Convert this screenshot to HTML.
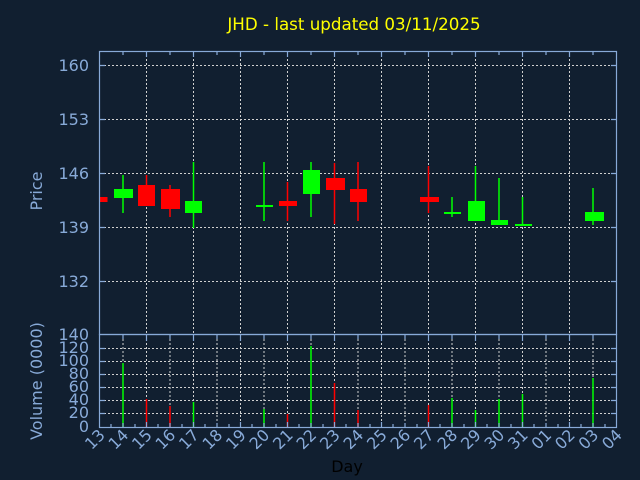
<!DOCTYPE html>
<html><head><meta charset="utf-8"><style>
html,body{margin:0;padding:0;background:#111f30;}
svg{display:block}
text{font-family:"DejaVu Sans","Liberation Sans",sans-serif;}
</style></head><body>
<svg width="640" height="480" viewBox="0 0 640 480" xmlns="http://www.w3.org/2000/svg">
<rect width="640" height="480" fill="#111f30"/>
<text x="354" y="30" fill="#ffff00" font-size="16.7" text-anchor="middle">JHD - last updated 03/11/2025</text>
<g stroke="#d0d0d0" stroke-width="1" stroke-dasharray="2,2" fill="none">
<path d="M100 65.5H616M100 119.5H616M100 173.5H616M100 227.5H616M100 281.5H616"/>
<path d="M146.5 51V334M193.5 51V334M240.5 51V334M287.5 51V334M334.5 51V334M381.5 51V334M428.5 51V334M475.5 51V334M522.5 51V334M569.5 51V334"/>
<path d="M100 348.5H616M100 361.5H616M100 374.5H616M100 387.5H616M100 400.5H616M100 413.5H616"/>
<path d="M123 335V427M146.5 335V427M170 335V427M193.5 335V427M217 335V427M240.5 335V427M264 335V427M287.5 335V427M311 335V427M334.5 335V427M358 335V427M381.5 335V427M405 335V427M428.5 335V427M452 335V427M475.5 335V427M499 335V427M522.5 335V427M546 335V427M569.5 335V427M593 335V427"/>
</g>
<g stroke-width="1.5">
<rect x="99.5" y="197" width="8" height="5" fill="#ff0000"/>
<line x1="123" y1="175" x2="123" y2="213" stroke="#00ff00"/><rect x="114" y="189" width="19" height="9" fill="#00ff00"/>
<line x1="146.5" y1="175" x2="146.5" y2="206" stroke="#ff0000"/><rect x="138" y="185" width="17" height="21" fill="#ff0000"/>
<line x1="170" y1="185" x2="170" y2="217" stroke="#ff0000"/><rect x="161" y="189" width="19" height="20" fill="#ff0000"/>
<line x1="193.5" y1="162" x2="193.5" y2="228" stroke="#00ff00"/><rect x="185" y="201" width="17" height="12" fill="#00ff00"/>
<line x1="264" y1="162" x2="264" y2="221" stroke="#00ff00"/><rect x="256" y="205" width="17" height="2" fill="#00ff00"/>
<line x1="287.5" y1="182" x2="287.5" y2="221" stroke="#ff0000"/><rect x="279" y="201" width="18" height="5" fill="#ff0000"/>
<line x1="311" y1="162" x2="311" y2="217" stroke="#00ff00"/><rect x="303" y="170" width="17" height="24" fill="#00ff00"/>
<line x1="334.5" y1="163" x2="334.5" y2="224" stroke="#ff0000"/><rect x="326" y="178" width="19" height="12" fill="#ff0000"/>
<line x1="358" y1="162" x2="358" y2="221" stroke="#ff0000"/><rect x="350" y="189" width="17" height="13" fill="#ff0000"/>
<line x1="428.5" y1="166" x2="428.5" y2="213" stroke="#ff0000"/><rect x="420" y="197" width="19" height="5" fill="#ff0000"/>
<line x1="452" y1="197" x2="452" y2="217" stroke="#00ff00"/><rect x="444" y="212" width="17" height="2" fill="#00ff00"/>
<line x1="475.5" y1="166" x2="475.5" y2="221" stroke="#00ff00"/><rect x="468" y="201" width="17" height="20" fill="#00ff00"/>
<line x1="499" y1="178" x2="499" y2="225" stroke="#00ff00"/><rect x="491" y="220" width="17" height="5" fill="#00ff00"/>
<line x1="522.5" y1="197" x2="522.5" y2="226" stroke="#00ff00"/><rect x="515" y="224" width="17" height="2" fill="#00ff00"/>
<line x1="593" y1="188" x2="593" y2="225" stroke="#00ff00"/><rect x="585" y="212" width="19" height="9" fill="#00ff00"/>
</g>
<g stroke-width="1.5">
<line x1="123" y1="363" x2="123" y2="427" stroke="#00ff00"/>
<line x1="146.5" y1="399" x2="146.5" y2="427" stroke="#ff0000"/>
<line x1="170" y1="406" x2="170" y2="427" stroke="#ff0000"/>
<line x1="193.5" y1="402" x2="193.5" y2="427" stroke="#00ff00"/>
<line x1="264" y1="409" x2="264" y2="427" stroke="#00ff00"/>
<line x1="287.5" y1="414" x2="287.5" y2="427" stroke="#ff0000"/>
<line x1="311" y1="346" x2="311" y2="427" stroke="#00ff00"/>
<line x1="334.5" y1="383" x2="334.5" y2="427" stroke="#ff0000"/>
<line x1="358" y1="410" x2="358" y2="427" stroke="#ff0000"/>
<line x1="428.5" y1="405" x2="428.5" y2="427" stroke="#ff0000"/>
<line x1="452" y1="398" x2="452" y2="427" stroke="#00ff00"/>
<line x1="475.5" y1="410" x2="475.5" y2="427" stroke="#00ff00"/>
<line x1="499" y1="399" x2="499" y2="427" stroke="#00ff00"/>
<line x1="522.5" y1="394" x2="522.5" y2="427" stroke="#00ff00"/>
<line x1="593" y1="378" x2="593" y2="427" stroke="#00ff00"/>
</g>
<g stroke="#88aad8" stroke-width="1.2" fill="none">
<rect x="99.5" y="51.5" width="517" height="283"/>
<rect x="99.5" y="334.5" width="517" height="93"/>
<path d="M100 65.5h5M100 119.5h5M100 173.5h5M100 227.5h5M100 281.5h5M616 65.5h-5M616 119.5h-5M616 173.5h-5M616 227.5h-5M616 281.5h-5"/>
<path d="M100 348.5h5M100 361.5h5M100 374.5h5M100 387.5h5M100 400.5h5M100 413.5h5M616 348.5h-5M616 361.5h-5M616 374.5h-5M616 387.5h-5M616 400.5h-5M616 413.5h-5"/>
<path d="M123 51v4M146.5 51v6M170 51v4M193.5 51v6M217 51v4M240.5 51v6M264 51v4M287.5 51v6M311 51v4M334.5 51v6M358 51v4M381.5 51v6M405 51v4M428.5 51v6M452 51v4M475.5 51v6M499 51v4M522.5 51v6M546 51v4M569.5 51v6M593 51v4"/>
<path d="M123 335v4M146.5 335v6M170 335v4M193.5 335v6M217 335v4M240.5 335v6M264 335v4M287.5 335v6M311 335v4M334.5 335v6M358 335v4M381.5 335v6M405 335v4M428.5 335v6M452 335v4M475.5 335v6M499 335v4M522.5 335v6M546 335v4M569.5 335v6M593 335v4"/>
<path d="M111 427v-3M123 427v-4M135 427v-3M146.5 427v-5M158 427v-3M170 427v-4M182 427v-3M193.5 427v-5M205 427v-3M217 427v-4M229 427v-3M240.5 427v-5M252 427v-3M264 427v-4M276 427v-3M287.5 427v-5M299 427v-3M311 427v-4M323 427v-3M334.5 427v-5M346 427v-3M358 427v-4M370 427v-3M381.5 427v-5M393 427v-3M405 427v-4M417 427v-3M428.5 427v-5M440 427v-3M452 427v-4M464 427v-3M475.5 427v-5M487 427v-3M499 427v-4M511 427v-3M522.5 427v-5M534 427v-3M546 427v-4M558 427v-3M569.5 427v-5M581 427v-3M593 427v-4M605 427v-3"/>
</g>
<g fill="#88aad8" font-size="16" text-anchor="end">
<text x="89" y="71">160</text><text x="89" y="125">153</text><text x="89" y="179">146</text><text x="89" y="233">139</text><text x="89" y="287">132</text>
<text x="89" y="340">140</text><text x="89" y="353">120</text><text x="89" y="366">100</text><text x="89" y="379">80</text><text x="89" y="392">60</text><text x="89" y="405">40</text><text x="89" y="418">20</text><text x="89" y="432">0</text>
</g>
<text x="42" y="191" fill="#88aad8" font-size="16" text-anchor="middle" transform="rotate(-90 42 191)">Price</text>
<text x="42" y="381" fill="#88aad8" font-size="16" text-anchor="middle" transform="rotate(-90 42 381)">Volume (0000)</text>
<text x="347" y="472" fill="#000" font-size="16" text-anchor="middle">Day</text>
<g fill="#88aad8" font-size="16" text-anchor="end">
<text transform="translate(106,436) rotate(-45)">13</text>
<text transform="translate(129.5,436) rotate(-45)">14</text>
<text transform="translate(153,436) rotate(-45)">15</text>
<text transform="translate(176.5,436) rotate(-45)">16</text>
<text transform="translate(200,436) rotate(-45)">17</text>
<text transform="translate(223.5,436) rotate(-45)">18</text>
<text transform="translate(247,436) rotate(-45)">19</text>
<text transform="translate(270.5,436) rotate(-45)">20</text>
<text transform="translate(294,436) rotate(-45)">21</text>
<text transform="translate(317.5,436) rotate(-45)">22</text>
<text transform="translate(341,436) rotate(-45)">23</text>
<text transform="translate(364.5,436) rotate(-45)">24</text>
<text transform="translate(388,436) rotate(-45)">25</text>
<text transform="translate(411.5,436) rotate(-45)">26</text>
<text transform="translate(435,436) rotate(-45)">27</text>
<text transform="translate(458.5,436) rotate(-45)">28</text>
<text transform="translate(482,436) rotate(-45)">29</text>
<text transform="translate(505.5,436) rotate(-45)">30</text>
<text transform="translate(529,436) rotate(-45)">31</text>
<text transform="translate(552.5,436) rotate(-45)">01</text>
<text transform="translate(576,436) rotate(-45)">02</text>
<text transform="translate(599.5,436) rotate(-45)">03</text>
<text transform="translate(623,436) rotate(-45)">04</text>
</g>
</svg>
</body></html>
